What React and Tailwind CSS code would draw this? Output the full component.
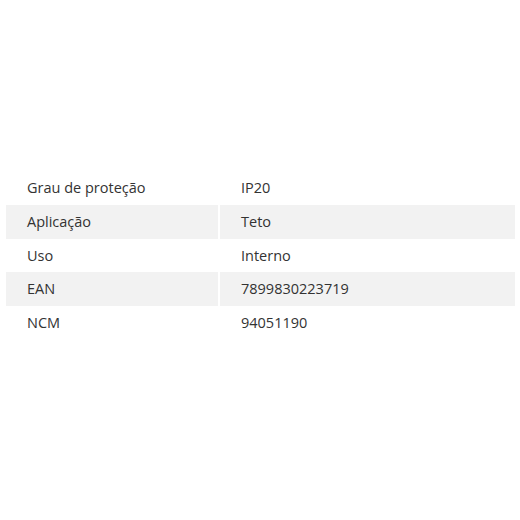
const specs = [
  ['Grau de proteção', 'IP20'],
  ['Aplicação', 'Teto'],
  ['Uso', 'Interno'],
  ['EAN', '7899830223719'],
  ['NCM', '94051190'],
];

export default function App() {
  return (
    <div className="bg-white w-[520px] h-[520px] pt-[171px] pl-[6px] text-[#333] text-[14.5px]" style={{ fontFamily: '"Open Sans", "Noto Sans", sans-serif' }}>
      <div className="w-[509px] flex flex-col">
        {specs.map(([label, value], i) => (
          <div key={label} className="flex gap-[2px] h-[33.8px]">
            <div className={`w-[212px] flex items-center pl-[21px] ${i % 2 ? 'bg-[#f2f2f2]' : ''}`}>{label}</div>
            <div className={`flex-1 flex items-center pl-[21px] ${i % 2 ? 'bg-[#f2f2f2]' : ''}`}>{value}</div>
          </div>
        ))}
      </div>
    </div>
  );
}
